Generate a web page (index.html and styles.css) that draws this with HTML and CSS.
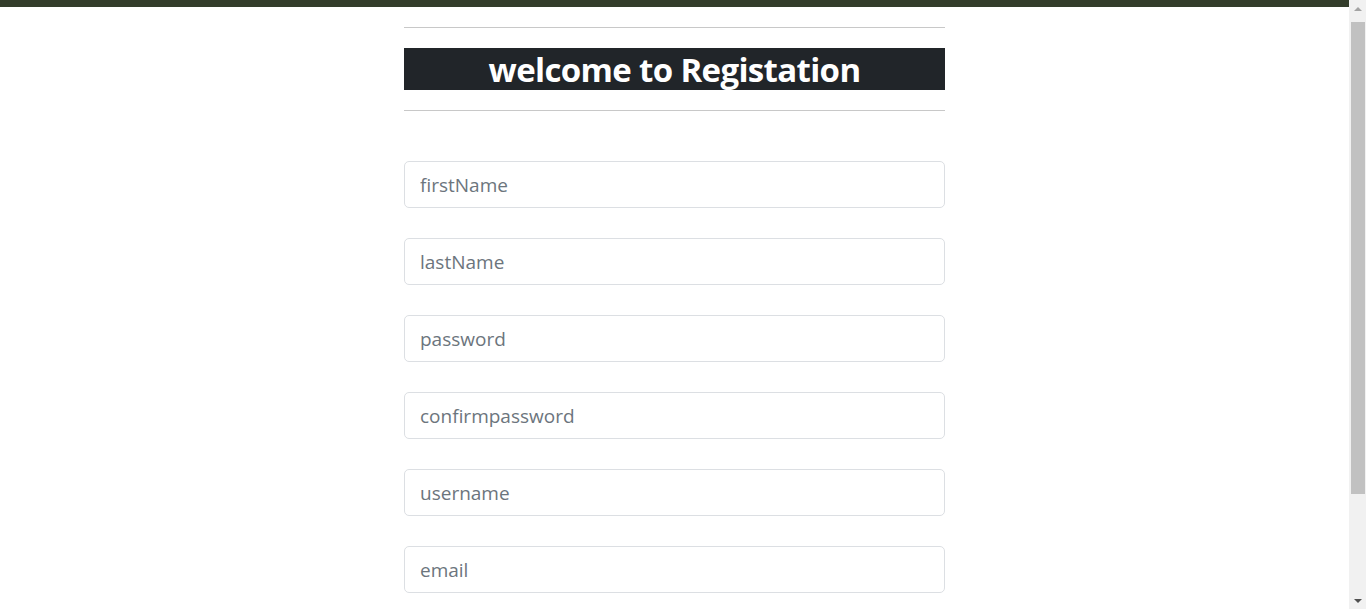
FILE: index.html
```html
<!DOCTYPE html>
<html lang="en">
<head>
<meta charset="utf-8">
<title>Registration</title>
<link rel="stylesheet" href="styles.css">
</head>
<body>
<div class="frame">
  <div class="page">
    <div class="topbar"></div>
    <main class="container">
      <hr class="rule">
      <h1 class="title">welcome to Registation</h1>
      <hr class="rule">
      <form class="form">
        <input class="field" type="text" placeholder="firstName">
        <input class="field" type="text" placeholder="lastName">
        <input class="field" type="password" placeholder="password">
        <input class="field" type="password" placeholder="confirmpassword">
        <input class="field" type="text" placeholder="username">
        <input class="field" type="email" placeholder="email">
      </form>
    </main>
  </div>
  <div class="scrollbar" aria-hidden="true">
    <div class="arrow arrow-up"></div>
    <div class="thumb-track"><div class="thumb"></div></div>
    <div class="arrow arrow-down"></div>
  </div>
</div>
</body>
</html>
```

FILE: styles.css
```css
html, body {
  margin: 0;
  padding: 0;
  background: #ffffff;
  height: 100%;
  overflow: hidden;
}
body {
  font-family: "Open Sans", "Noto Sans", sans-serif;
  color: #212529;
}
.frame {
  display: flex;
  height: 100%;
}
.page {
  flex: 1;
  min-width: 0;
  overflow: hidden;
}
.topbar {
  height: 7px;
  background: #333d2b;
}
.container {
  width: 541px;
  margin: 0 auto;
}
.rule {
  margin: 20px 0;
  border: 0;
  border-top: 1px solid #c8c8c8;
  height: 0;
}
.title {
  margin: 0;
  height: 42px;
  line-height: 44px;
  background: #212529;
  color: #ffffff;
  text-align: center;
  font-size: 33px;
  font-weight: 700;
  letter-spacing: -0.65px;
}
.form {
  display: flex;
  flex-direction: column;
  gap: 30px;
  padding-top: 30px;
}
.field {
  box-sizing: border-box;
  width: 100%;
  height: 47px;
  padding: 8px 15px;
  border: 1px solid #dcdfe3;
  border-radius: 5px;
  font-family: "Open Sans", "Noto Sans", sans-serif;
  font-size: 19px;
  color: #495057;
  background: #fff;
  outline: none;
}
.field::placeholder {
  color: #6c757d;
  opacity: 1;
}
.scrollbar {
  width: 17px;
  flex: none;
  background: #f1f1f1;
  display: flex;
  flex-direction: column;
  align-items: center;
}
.arrow {
  height: 17px;
  width: 17px;
  display: flex;
  align-items: center;
  justify-content: center;
  flex: none;
}
.arrow::before {
  content: "";
  width: 0;
  height: 0;
  border-left: 4px solid transparent;
  border-right: 4px solid transparent;
}
.arrow-up::before {
  border-bottom: 4px solid #a3a3a3;
}
.arrow-down::before {
  border-top: 4px solid #505050;
}
.thumb-track {
  flex: 1;
  width: 17px;
  padding-top: 5px;
  box-sizing: border-box;
}
.thumb {
  margin: 0 auto;
  width: 14px;
  height: 472px;
  background: #c1c1c1;
}
```
